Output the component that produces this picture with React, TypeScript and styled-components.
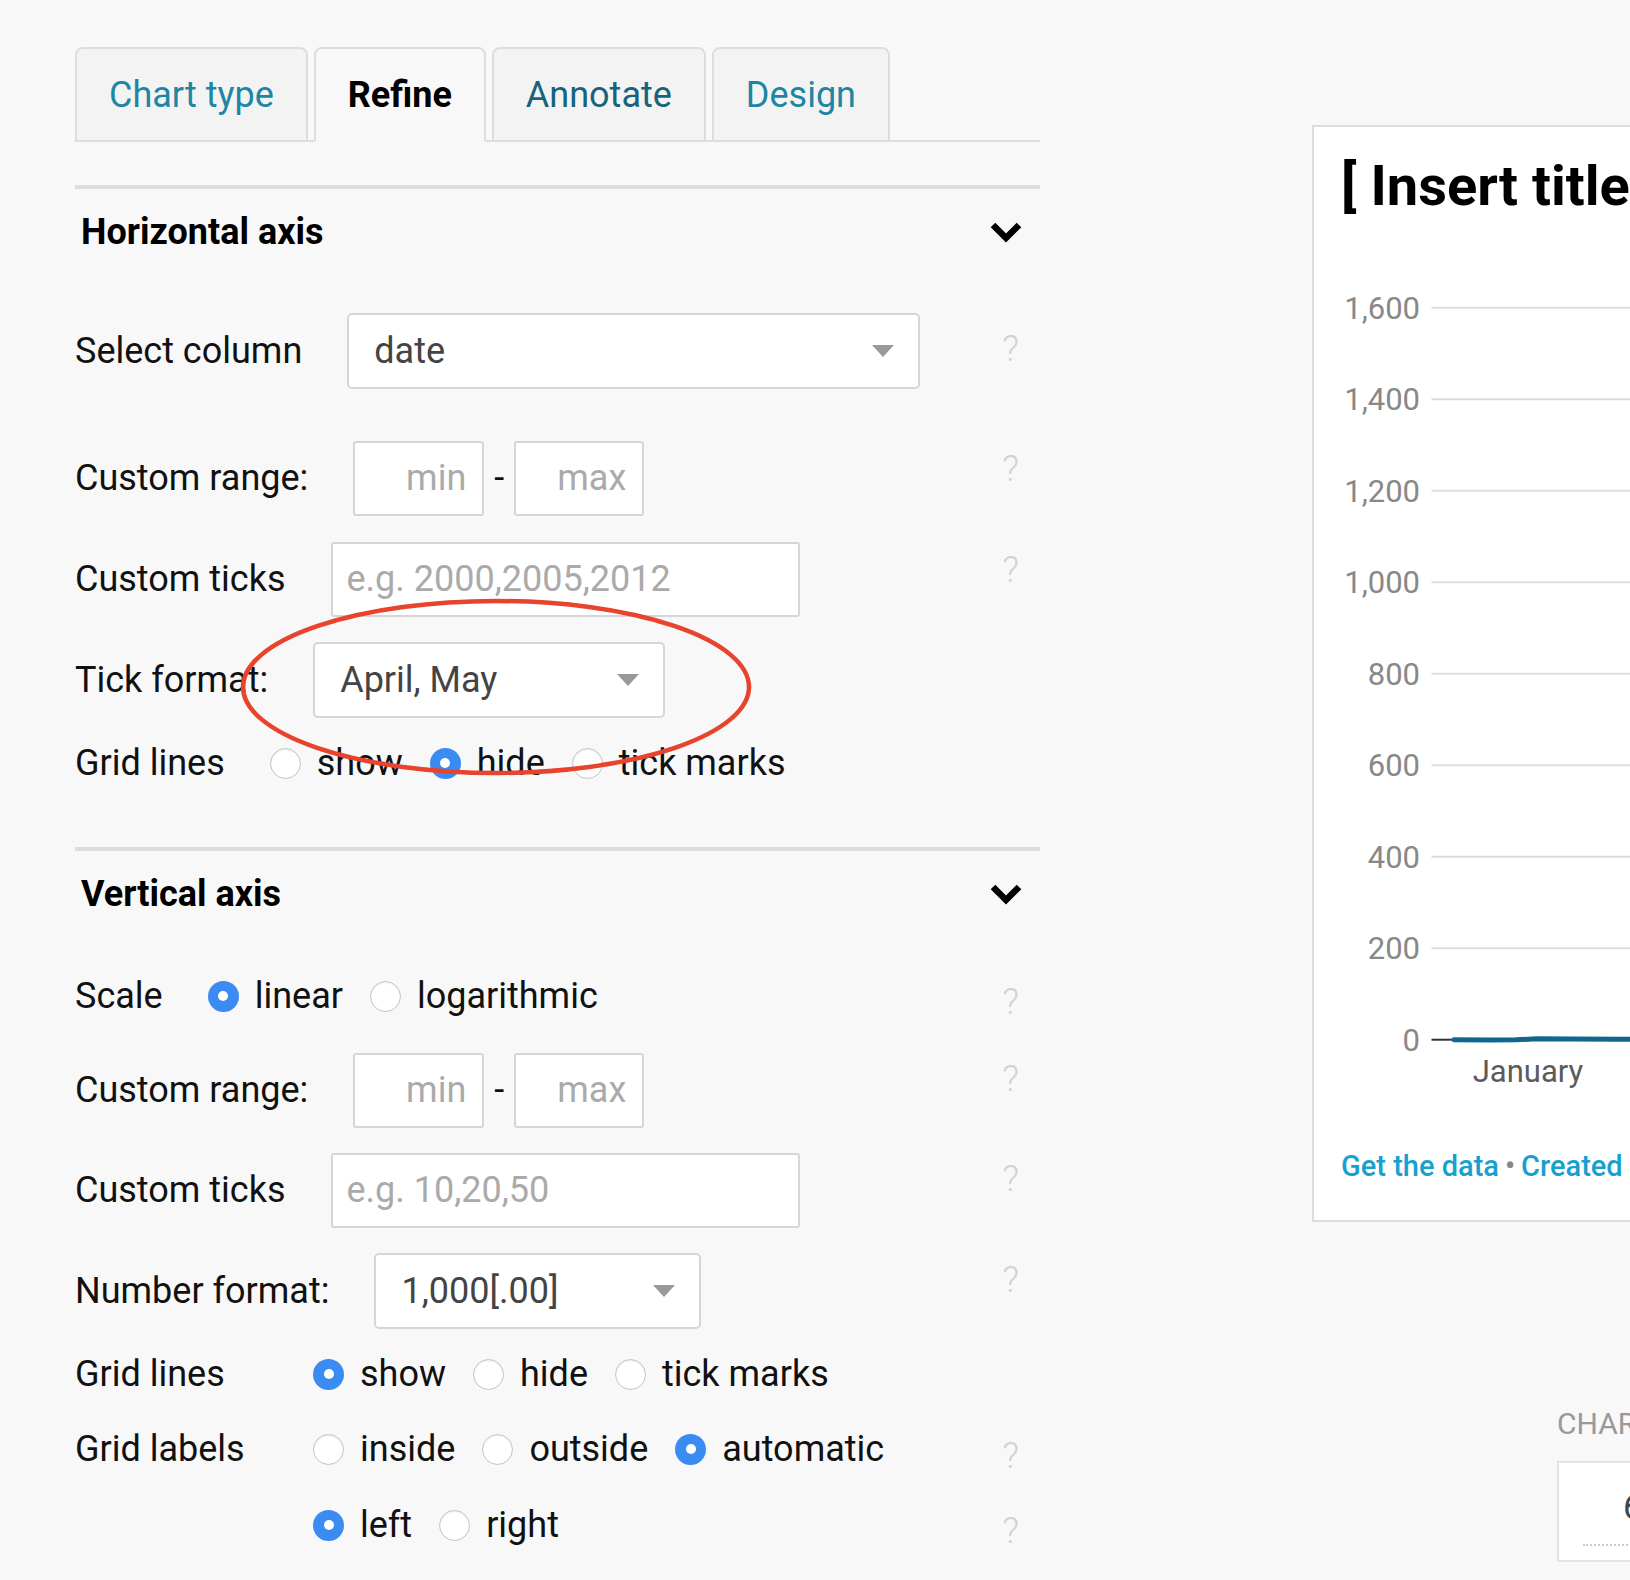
import React from "react";
import styled, { createGlobalStyle } from "styled-components";

const GlobalStyle = createGlobalStyle`
  html, body { margin: 0; padding: 0; background: #f8f8f8; overflow: hidden; }
  body { font-family: Roboto, "Liberation Sans", Arial, sans-serif; color: #111; }
  * { box-sizing: border-box; }
`;

const Page = styled.div`
  display: flex;
  align-items: flex-start;
  padding: 47px 0 0 75px;
  width: 1630px;
  height: 1580px;
  overflow: hidden;
`;

const LeftPanel = styled.div`
  position: relative;
  width: 965px;
  flex-shrink: 0;
`;

const TabBar = styled.div`
  display: flex;
  gap: 6px;
  border-bottom: 2px solid #ddd;
  margin-bottom: 43px;
`;

const Tab = styled.div<{ $active?: boolean; $dark?: boolean }>`
  height: 95px;
  margin-bottom: -2px;
  padding: 0 32px;
  display: flex;
  align-items: center;
  border: 2px solid #ddd;
  border-bottom-color: ${(p) => (p.$active ? "#f8f8f8" : "#ddd")};
  border-radius: 8px 8px 0 0;
  background: ${(p) => (p.$active ? "#f8f8f8" : "#f3f3f3")};
  font-size: 36px;
  font-weight: ${(p) => (p.$active ? 700 : 400)};
  color: ${(p) => (p.$active ? "#000" : p.$dark ? "#17637e" : "#1c86a4")};
  white-space: nowrap;
`;

const Section = styled.section`
  border-top: 4px solid #ddd;
  & + & {
    margin-top: 54px;
  }
`;

const SectionHeader = styled.div`
  height: 86px;
  display: flex;
  align-items: center;
  justify-content: space-between;
  padding: 0 17px 0 6px;
  font-size: 36px;
  font-weight: 700;
  color: #000;
`;

const Row = styled.div<{ $h?: number; $mt: number }>`
  display: flex;
  align-items: center;
  height: ${(p) => p.$h ?? 76}px;
  margin-top: ${(p) => p.$mt}px;
`;

const Label = styled.span<{ $w?: number }>`
  font-size: 36px;
  color: #111;
  white-space: nowrap;
  flex-shrink: 0;
  ${(p) => (p.$w ? `width: ${p.$w}px;` : `margin-right: 45px;`)}
`;

const Select = styled.div<{ $w: number }>`
  width: ${(p) => p.$w}px;
  height: 76px;
  flex-shrink: 0;
  background: #fff;
  border: 2px solid #d6d6d6;
  border-radius: 5px;
  display: flex;
  align-items: center;
  justify-content: space-between;
  padding: 0 24px 0 25px;
  font-size: 36px;
  color: #444;
`;

const Caret = styled.span`
  width: 0;
  height: 0;
  border-left: 11px solid transparent;
  border-right: 11px solid transparent;
  border-top: 12px solid #999;
`;

const TextInput = styled.input<{ $w: number; $right?: boolean }>`
  width: ${(p) => p.$w}px;
  height: 75px;
  flex-shrink: 0;
  background: #fff;
  border: 2px solid #d6d6d6;
  border-radius: 3px;
  padding: ${(p) => (p.$right ? "0 16px 0 8px" : "0 14px")};
  text-align: ${(p) => (p.$right ? "right" : "left")};
  font-family: Roboto, "Liberation Sans", Arial, sans-serif;
  font-size: 36px;
  color: #444;
  outline: none;
  &::placeholder {
    color: #aaa;
  }
`;

const Dash = styled.span`
  font-size: 36px;
  margin: 0 10px;
  color: #111;
`;

const Option = styled.label`
  display: inline-flex;
  align-items: center;
  gap: 16px;
  margin-right: 27px;
  font-size: 36px;
  color: #111;
  white-space: nowrap;
`;

const RadioCircle = styled.span<{ $checked?: boolean }>`
  width: 31px;
  height: 31px;
  border-radius: 50%;
  flex-shrink: 0;
  display: flex;
  align-items: center;
  justify-content: center;
  background: ${(p) => (p.$checked ? "#3b8cf2" : "#fff")};
  border: ${(p) => (p.$checked ? "none" : "1.5px solid #c4c4c4")};
  box-shadow: ${(p) => (p.$checked ? "none" : "inset 0 1px 2px rgba(0,0,0,0.08)")};
  &::after {
    content: "";
    display: ${(p) => (p.$checked ? "block" : "none")};
    width: 10px;
    height: 10px;
    border-radius: 50%;
    background: #fff;
  }
`;

const Help = styled.span<{ $dy?: number }>`
  margin-left: auto;
  margin-right: 21px;
  font-size: 37px;
  font-weight: 300;
  color: #d2d2d2;
  transform: translateY(${(p) => p.$dy ?? 0}px);
`;

const Annotation = styled.svg`
  position: absolute;
  left: 0;
  top: 0;
  overflow: visible;
  pointer-events: none;
`;

const RightColumn = styled.div`
  margin-left: 272px;
  padding-top: 78px;
  flex-shrink: 0;
  display: flex;
  flex-direction: column;
  align-items: flex-start;
`;

const ChartCard = styled.div`
  width: 700px;
  height: 1097px;
  background: #fff;
  border: 2px solid #ddd;
  padding: 31px 0 0 27px;
  display: flex;
  flex-direction: column;
  overflow: hidden;
`;

const ChartTitle = styled.div`
  font-size: 56px;
  line-height: 56px;
  font-weight: 700;
  color: #000;
  white-space: nowrap;
`;

const ChartSvg = styled.svg`
  margin-top: 46px;
  flex-shrink: 0;
  font-family: Roboto, "Liberation Sans", Arial, sans-serif;
`;

const Footer = styled.div`
  margin-top: 49px;
  font-size: 29px;
  line-height: 34px;
  font-weight: 500;
  color: #18a0cf;
  white-space: nowrap;
`;

const Bullet = styled.span`
  color: #888;
  margin: 0 6px;
`;

const SizeBlock = styled.div`
  margin: 187px 0 0 245px;
  display: flex;
  flex-direction: column;
`;

const SizeLabel = styled.div`
  font-size: 30px;
  line-height: 30px;
  color: #999;
  white-space: nowrap;
`;

const SizeBox = styled.div`
  margin-top: 22px;
  width: 300px;
  height: 101px;
  background: #fff;
  border: 2px solid #e3e3e3;
  padding: 27px 0 0 24px;
`;

const SizeInput = styled.div`
  width: 160px;
  font-size: 35px;
  line-height: 35px;
  padding: 0 0 19px 40px;
  color: #444;
  border-bottom: 2px dotted #ccc;
`;

const Chevron = () => (
  <svg width="34" height="23" viewBox="0 0 34 23">
    <polyline points="4,4 17,17 30,4" fill="none" stroke="#000" strokeWidth="6.5" strokeLinejoin="miter" />
  </svg>
);

type Opt = { label: string; checked?: boolean };

const Radios = ({ options }: { options: Opt[] }) => (
  <>
    {options.map((o) => (
      <Option key={o.label}>
        <RadioCircle $checked={o.checked} />
        {o.label}
      </Option>
    ))}
  </>
);

const ticks = [1600, 1400, 1200, 1000, 800, 600, 400, 200, 0];

export default function App() {
  return (
    <>
      <GlobalStyle />
      <Page>
        <LeftPanel>
          <TabBar>
            <Tab>Chart type</Tab>
            <Tab $active>Refine</Tab>
            <Tab $dark>Annotate</Tab>
            <Tab>Design</Tab>
          </TabBar>

          <Section>
            <SectionHeader>
              Horizontal axis
              <Chevron />
            </SectionHeader>
            <Row $mt={38}>
              <Label>Select column</Label>
              <Select $w={573}>
                date
                <Caret />
              </Select>
              <Help $dy={-3}>?</Help>
            </Row>
            <Row $mt={51}>
              <Label>Custom range:</Label>
              <TextInput $w={131} $right placeholder="min" />
              <Dash>-</Dash>
              <TextInput $w={130} $right placeholder="max" />
              <Help $dy={-10}>?</Help>
            </Row>
            <Row $mt={25}>
              <Label>Custom ticks</Label>
              <TextInput $w={469} placeholder="e.g. 2000,2005,2012" />
              <Help $dy={-10}>?</Help>
            </Row>
            <Row $mt={25}>
              <Label>Tick format:</Label>
              <Select $w={352}>
                April, May
                <Caret />
              </Select>
            </Row>
            <Row $h={60} $mt={15}>
              <Label>Grid lines</Label>
              <Radios options={[{ label: "show" }, { label: "hide", checked: true }, { label: "tick marks" }]} />
            </Row>
          </Section>

          <Section>
            <SectionHeader>
              Vertical axis
              <Chevron />
            </SectionHeader>
            <Row $h={60} $mt={29}>
              <Label>Scale</Label>
              <Radios options={[{ label: "linear", checked: true }, { label: "logarithmic" }]} />
              <Help $dy={5}>?</Help>
            </Row>
            <Row $mt={26}>
              <Label>Custom range:</Label>
              <TextInput $w={131} $right placeholder="min" />
              <Dash>-</Dash>
              <TextInput $w={130} $right placeholder="max" />
              <Help $dy={-12}>?</Help>
            </Row>
            <Row $mt={24}>
              <Label>Custom ticks</Label>
              <TextInput $w={469} placeholder="e.g. 10,20,50" />
              <Help $dy={-12}>?</Help>
            </Row>
            <Row $mt={25}>
              <Label>Number format:</Label>
              <Select $w={327}>
                1,000[.00]
                <Caret />
              </Select>
              <Help $dy={-12}>?</Help>
            </Row>
            <Row $h={60} $mt={15}>
              <Label $w={238}>Grid lines</Label>
              <Radios options={[{ label: "show", checked: true }, { label: "hide" }, { label: "tick marks" }]} />
            </Row>
            <Row $h={60} $mt={15}>
              <Label $w={238}>Grid labels</Label>
              <Radios options={[{ label: "inside" }, { label: "outside" }, { label: "automatic", checked: true }]} />
              <Help $dy={6}>?</Help>
            </Row>
            <Row $h={60} $mt={16}>
              <Label $w={238} />
              <Radios options={[{ label: "left", checked: true }, { label: "right" }]} />
              <Help $dy={5}>?</Help>
            </Row>
          </Section>

          <Annotation width="965" height="1500">
            <ellipse cx="421" cy="640" rx="253" ry="86" fill="none" stroke="#e8432d" strokeWidth="4.5" />
          </Annotation>
        </LeftPanel>

        <RightColumn>
          <ChartCard>
            <ChartTitle>[ Insert title here ]</ChartTitle>
            <ChartSvg width="680" height="840" viewBox="0 0 680 840">
              {ticks.map((t, i) => {
                const y = 47.7 + i * 91.5;
                return (
                  <g key={t}>
                    <text x="79" y={y + 11} textAnchor="end" fontSize="31" fill="#888">
                      {t.toLocaleString("en-US")}
                    </text>
                    {t !== 0 && <line x1="90.5" x2="680" y1={y} y2={y} stroke="#ddd" strokeWidth="2" />}
                  </g>
                );
              })}
              <line x1="90.5" x2="113" y1="779.7" y2="779.7" stroke="#333" strokeWidth="2" />
              <path
                d="M113 779.7 L150 780 L175 779.8 L196 778.8 L230 779 L280 779.3 L680 779.2"
                fill="none"
                stroke="#0d6790"
                strokeWidth="5"
                strokeLinecap="round"
                strokeLinejoin="round"
              />
              <text x="187" y="822" textAnchor="middle" fontSize="31" fill="#5b5b5b">
                January
              </text>
            </ChartSvg>
            <Footer>
              Get the data<Bullet>•</Bullet>Created with Datawrapper
            </Footer>
          </ChartCard>
          <SizeBlock>
            <SizeLabel>CHART SIZE</SizeLabel>
            <SizeBox>
              <SizeInput>600</SizeInput>
            </SizeBox>
          </SizeBlock>
        </RightColumn>
      </Page>
    </>
  );
}
